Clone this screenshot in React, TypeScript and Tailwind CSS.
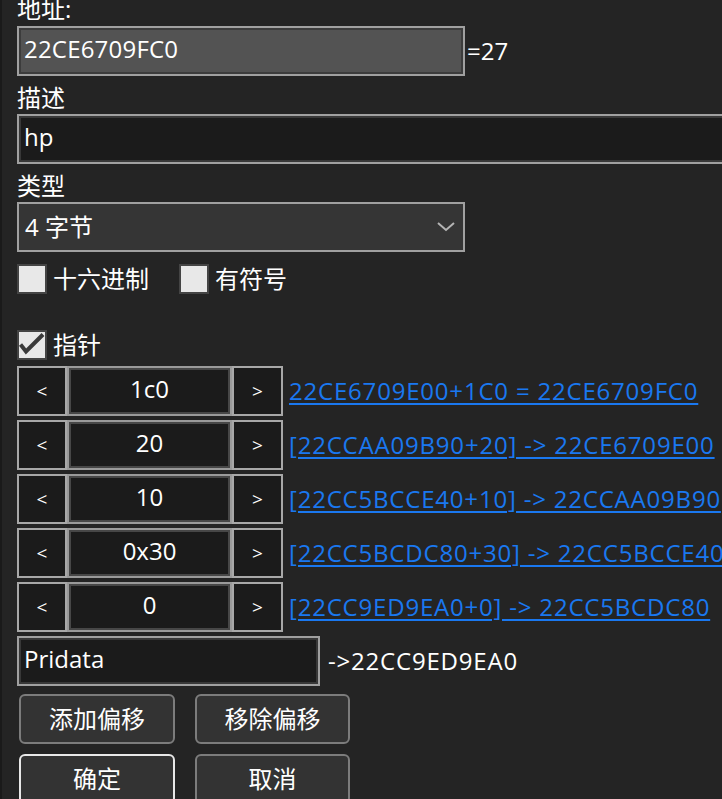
import React from "react";

const FONT = "font-['Open_Sans','Noto_Sans_CJK_SC',sans-serif]";

function Check({ checked }: { checked?: boolean }) {
  return (
    <div className="w-[30px] h-[30px] border-2 border-[#444444] bg-[#e8e8e8] shrink-0 relative">
      {checked && (
        <svg width="26" height="26" viewBox="0 0 26 26" className="absolute left-0 top-0">
          <polyline points="1.5,12.5 7,19.5 24,2.5" fill="none" stroke="#3a3a3a" strokeWidth="4" strokeLinejoin="miter" />
        </svg>
      )}
    </div>
  );
}

function OffsetRow({ value, link }: { value: string; link: string }) {
  return (
    <div className="flex h-[50px] items-center">
      <div className="w-[50px] h-full border-2 border-[#a8a8a8] bg-[#1b1b1b] flex items-center justify-center text-[19px] shrink-0">
        &lt;
      </div>
      <div className="w-[165px] h-full border-2 border-[#9a9a9a] shrink-0">
        <div className="h-full border-2 border-[#474747] bg-[#1b1b1b] flex items-center justify-center pb-[4px]">
          {value}
        </div>
      </div>
      <div className="w-[51px] h-full border-2 border-[#a8a8a8] bg-[#1b1b1b] flex items-center justify-center text-[19px] shrink-0">
        &gt;
      </div>
      <span className="ml-[6px] text-[#1a78f0] underline decoration-2 underline-offset-[3px] whitespace-nowrap tracking-[0.8px] cursor-pointer">
        {link}
      </span>
    </div>
  );
}

export default function App() {
  const rows = [
    { value: "1c0", link: "22CE6709E00+1C0 = 22CE6709FC0" },
    { value: "20", link: "[22CCAA09B90+20] -> 22CE6709E00" },
    { value: "10", link: "[22CC5BCCE40+10] -> 22CCAA09B90" },
    { value: "0x30", link: "[22CC5BCDC80+30] -> 22CC5BCCE40" },
    { value: "0", link: "[22CC9ED9EA0+0] -> 22CC5BCDC80" },
  ];
  return (
    <div className={`w-[722px] h-[799px] bg-[#242424] relative overflow-hidden text-white text-[24px] ${FONT}`}>
      <div className="absolute left-0 top-0 w-[2px] h-full bg-[#1a1a1a]" />
      <div className="pl-[17px] flex flex-col">
        <div className="h-[26px] leading-[18px]">地址:</div>
        <div className="flex h-[50px] items-center">
          <div className="w-[448px] h-full border-2 border-[#a0a0a0] shrink-0">
            <div className="h-full border-2 border-[#3c3c3c] bg-[#535353] flex items-center pl-[3px] pb-[4px] tracking-[0.2px]">
              22CE6709FC0
            </div>
          </div>
          <span className="ml-[2px]">=27</span>
        </div>

        <div className="h-[38px] pt-[10px] leading-[23px]">描述</div>
        <div className="w-[720px] h-[50px] border-2 border-[#a0a0a0]">
          <div className="h-full border-2 border-[#383838] bg-[#1b1b1b] flex items-center pl-[3px] pb-[4px]">hp</div>
        </div>

        <div className="h-[38px] pt-[10px] leading-[23px]">类型</div>
        <div className="w-[448px] h-[50px] border-2 border-[#a0a0a0] bg-[#353535] flex items-center justify-between pl-[6px] pr-[8px]">
          <span>4 字节</span>
          <svg width="18" height="10" viewBox="0 0 18 10">
            <polyline points="1,1 9,8 17,1" fill="none" stroke="#b4b4b4" strokeWidth="2" />
          </svg>
        </div>

        <div className="mt-[12px] h-[30px] flex items-center">
          <Check />
          <span className="ml-[6px]">十六进制</span>
          <div className="ml-[30px]">
            <Check />
          </div>
          <span className="ml-[6px]">有符号</span>
        </div>

        <div className="mt-[36px] h-[30px] flex items-center">
          <Check checked />
          <span className="ml-[6px]">指针</span>
        </div>

        <div className="mt-[6px] flex flex-col gap-[4px]">
          {rows.map((r, i) => (
            <OffsetRow key={i} value={r.value} link={r.link} />
          ))}
        </div>

        <div className="mt-[4px] flex h-[50px] items-center">
          <div className="w-[303px] h-full border-2 border-[#a0a0a0] shrink-0">
            <div className="h-full border-2 border-[#383838] bg-[#1b1b1b] flex items-center pl-[3px] pb-[4px]">
              Pridata
            </div>
          </div>
          <span className="ml-[8px] tracking-[0.8px]">-&gt;22CC9ED9EA0</span>
        </div>

        <div className="mt-[8px] ml-[2px] flex gap-[20px]">
          <button className="w-[156px] h-[50px] rounded-[6px] border-2 border-[#7c7c7c] bg-[#333333] flex items-center justify-center">
            添加偏移
          </button>
          <button className="w-[155px] h-[50px] rounded-[6px] border-2 border-[#7c7c7c] bg-[#333333] flex items-center justify-center">
            移除偏移
          </button>
        </div>
        <div className="mt-[10px] ml-[2px] flex gap-[20px]">
          <button className="w-[156px] h-[50px] rounded-[6px] border-2 border-[#e8e8e8] bg-[#333333] flex items-center justify-center">
            确定
          </button>
          <button className="w-[155px] h-[50px] rounded-[6px] border-2 border-[#7c7c7c] bg-[#333333] flex items-center justify-center">
            取消
          </button>
        </div>
      </div>
    </div>
  );
}
